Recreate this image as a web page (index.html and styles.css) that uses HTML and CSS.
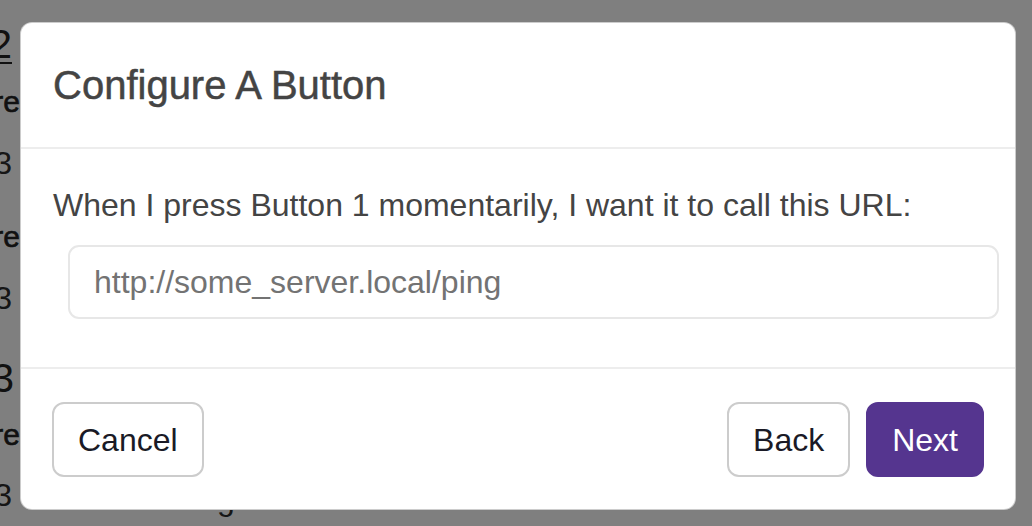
FILE: index.html
```html
<!DOCTYPE html>
<html lang="en">
<head>
<meta charset="utf-8">
<title>Configure A Button</title>
<link rel="stylesheet" href="styles.css">
</head>
<body>
<div class="page">
  <div class="line heading l1"><span class="cut"><span class="link">Button 2</span></span></div>
  <div class="line label l2"><span class="cut wide">Hardware</span></div>
  <div class="line value l3"><span class="cut">GPIO 3</span></div>
  <div class="line label l4"><span class="cut wide">Hardware</span></div>
  <div class="line value l5"><span class="cut">GPIO 3</span></div>
  <div class="line heading l6"><span class="cut mid">Button 3</span></div>
  <div class="line label l7"><span class="cut wide">Hardware</span></div>
  <div class="line value l8"><span class="cut">GPIO 3</span><span class="rest">g</span></div>
</div>

<div class="backdrop"></div>

<div class="modal">
  <div class="modal-header">
    <h5 class="modal-title">Configure A Button</h5>
  </div>
  <div class="modal-body">
    <p class="prompt">When I press Button 1 momentarily, I want it to call this URL:</p>
    <input class="url-input" type="text" placeholder="http://some_server.local/ping">
  </div>
  <div class="modal-footer">
    <button class="btn btn-outline">Cancel</button>
    <div class="spacer"></div>
    <button class="btn btn-outline">Back</button>
    <button class="btn btn-primary">Next</button>
  </div>
</div>
</body>
</html>
```

FILE: styles.css
```css
html, body {
  margin: 0;
  padding: 0;
}

body {
  width: 1032px;
  height: 526px;
  overflow: hidden;
  position: relative;
  background: #ffffff;
  font-family: "Liberation Sans", Arial, Helvetica, sans-serif;
}

.page {
  display: flex;
  flex-direction: column;
  color: #222;
}

.line {
  display: flex;
  white-space: nowrap;
  height: 40px;
  line-height: 40px;
}

.cut {
  display: flex;
  justify-content: flex-end;
  width: 12px;
  flex: none;
}

.cut.wide {
  width: 20px;
}

.cut.mid {
  width: 14px;
}

.rest {
  margin-left: 205px;
  padding-top: 4px;
}

.heading {
  font-size: 40px;
}

.heading .link {
  text-decoration: underline;
  text-decoration-thickness: 2px;
  text-underline-offset: 4px;
}

.label {
  font-size: 30px;
  -webkit-text-stroke: 0.6px #222;
}

.value {
  font-size: 32px;
  color: #2c2c2c;
}

.l1 { margin-top: 24px; }
.l2 { margin-top: 18px; }
.l3 { margin-top: 21px; }
.l4 { margin-top: 34px; }
.l5 { margin-top: 21px; }
.l6 { margin-top: 40px; }
.l7 { margin-top: 17px; }
.l8 { margin-top: 20px; }

.backdrop {
  position: absolute;
  inset: 0;
  background: rgba(0, 0, 0, 0.5);
}

.modal {
  position: absolute;
  left: 20px;
  top: 22px;
  width: 994px;
  height: 486px;
  background: #fff;
  border: 1px solid rgba(0, 0, 0, 0.2);
  border-radius: 12px;
  display: flex;
  flex-direction: column;
  color: #444;
}

.modal-header {
  padding: 32px;
  border-bottom: 2px solid #ededed;
}

.modal-title {
  margin: 0;
  font-size: 40px;
  line-height: 60px;
  font-weight: normal;
  -webkit-text-stroke: 0.5px #444;
  color: #444;
}

.modal-body {
  padding: 32px 16px 32px 32px;
  display: flex;
  flex-direction: column;
}

.prompt {
  margin: 0 0 16px 0;
  font-size: 32px;
  line-height: 48px;
}

.url-input {
  margin: 0 0 16px 15px;
  height: 74px;
  box-sizing: border-box;
  border: 2px solid #e7e7e7;
  border-radius: 11px;
  padding: 0 24px;
  font-family: "Liberation Sans", Arial, Helvetica, sans-serif;
  font-size: 32px;
  color: #444;
  outline: none;
}

.url-input::placeholder {
  color: #737373;
}

.modal-footer {
  border-top: 2px solid #ededed;
  padding: 33px 31px 31px 31px;
  display: flex;
  align-items: center;
  gap: 16px;
}

.spacer {
  flex: 1;
}

.btn {
  font-family: "Liberation Sans", Arial, Helvetica, sans-serif;
  font-size: 32px;
  line-height: 48px;
  padding: 12px 24px;
  border-radius: 12px;
  border: 2px solid #cccccc;
  background: #fff;
  color: #1a1a26;
  height: 75px;
  box-sizing: border-box;
  display: flex;
  align-items: center;
}

.btn-primary {
  background: #55358f;
  border-color: #55358f;
  color: #fff;
}
```
